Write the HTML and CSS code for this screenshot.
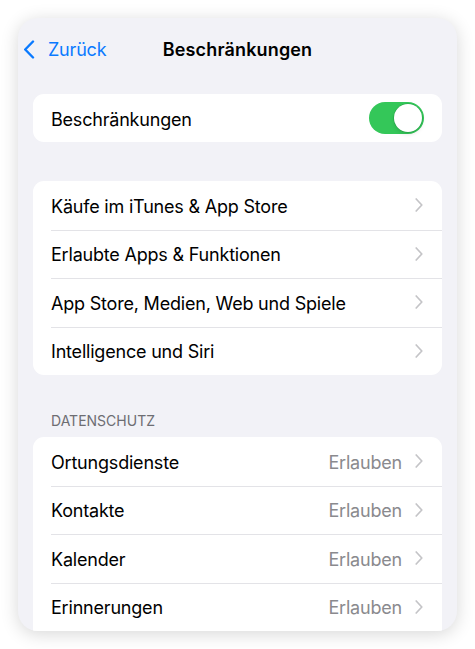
FILE: index.html
```html
<!DOCTYPE html>
<html lang="de">
<head>
<meta charset="utf-8">
<title>Beschränkungen</title>
<link rel="stylesheet" href="styles.css">
</head>
<body>
<div class="device">
  <header class="nav">
    <a class="back">
      <svg class="back-chev" width="12" height="19" viewBox="0 0 12 19"><path d="M10 1.5 L2.2 9.5 L10 17.5" fill="none" stroke="#0a7aff" stroke-width="2.4" stroke-linecap="round" stroke-linejoin="round"/></svg>
      <span>Zurück</span>
    </a>
    <h1 class="title">Beschränkungen</h1>
  </header>

  <section class="card first">
    <div class="row">
      <span class="label">Beschränkungen</span>
      <span class="toggle"><span class="knob"></span></span>
    </div>
  </section>

  <section class="card second">
    <div class="row"><span class="label">Käufe im iTunes &amp; App Store</span><svg class="chev" width="8" height="14" viewBox="0 0 8 14"><path d="M1.2 1 L6.8 7 L1.2 13" fill="none" stroke="#c4c4c7" stroke-width="1.7" stroke-linecap="round" stroke-linejoin="round"/></svg></div>
    <div class="row"><span class="label">Erlaubte Apps &amp; Funktionen</span><svg class="chev" width="8" height="14" viewBox="0 0 8 14"><path d="M1.2 1 L6.8 7 L1.2 13" fill="none" stroke="#c4c4c7" stroke-width="1.7" stroke-linecap="round" stroke-linejoin="round"/></svg></div>
    <div class="row"><span class="label">App Store, Medien, Web und Spiele</span><svg class="chev" width="8" height="14" viewBox="0 0 8 14"><path d="M1.2 1 L6.8 7 L1.2 13" fill="none" stroke="#c4c4c7" stroke-width="1.7" stroke-linecap="round" stroke-linejoin="round"/></svg></div>
    <div class="row"><span class="label">Intelligence und Siri</span><svg class="chev" width="8" height="14" viewBox="0 0 8 14"><path d="M1.2 1 L6.8 7 L1.2 13" fill="none" stroke="#c4c4c7" stroke-width="1.7" stroke-linecap="round" stroke-linejoin="round"/></svg></div>
  </section>

  <h2 class="section-head">DATENSCHUTZ</h2>
  <section class="card third">
    <div class="row"><span class="label">Ortungsdienste</span><span class="value">Erlauben</span><svg class="chev" width="8" height="14" viewBox="0 0 8 14"><path d="M1.2 1 L6.8 7 L1.2 13" fill="none" stroke="#c4c4c7" stroke-width="1.7" stroke-linecap="round" stroke-linejoin="round"/></svg></div>
    <div class="row"><span class="label">Kontakte</span><span class="value">Erlauben</span><svg class="chev" width="8" height="14" viewBox="0 0 8 14"><path d="M1.2 1 L6.8 7 L1.2 13" fill="none" stroke="#c4c4c7" stroke-width="1.7" stroke-linecap="round" stroke-linejoin="round"/></svg></div>
    <div class="row"><span class="label">Kalender</span><span class="value">Erlauben</span><svg class="chev" width="8" height="14" viewBox="0 0 8 14"><path d="M1.2 1 L6.8 7 L1.2 13" fill="none" stroke="#c4c4c7" stroke-width="1.7" stroke-linecap="round" stroke-linejoin="round"/></svg></div>
    <div class="row"><span class="label">Erinnerungen</span><span class="value">Erlauben</span><svg class="chev" width="8" height="14" viewBox="0 0 8 14"><path d="M1.2 1 L6.8 7 L1.2 13" fill="none" stroke="#c4c4c7" stroke-width="1.7" stroke-linecap="round" stroke-linejoin="round"/></svg></div>
  </section>
</div>
</body>
</html>
```
FILE: styles.css
```css
* { box-sizing: border-box; }
html, body { margin: 0; padding: 0; background: #ffffff; }
body {
  font-family: Inter, "Noto Sans", "Liberation Sans", sans-serif;
  color: #000;
  padding: 18px;
}
.device {
  width: 439px;
  height: 613px;
  background: #f2f2f7;
  border-radius: 20px;
  overflow: hidden;
  box-shadow: 0 3px 18px rgba(0, 0, 0, 0.16);
  padding: 0 15px;
}
.nav {
  position: relative;
  height: 62px;
  display: flex;
  align-items: center;
  justify-content: center;
}
.back {
  position: absolute;
  left: -10px;
  top: 0;
  bottom: 0;
  display: flex;
  align-items: center;
  gap: 13px;
  color: #0a7aff;
  font-size: 18px;
  letter-spacing: -0.2px;
}
.back-chev { display: block; }
.title {
  margin: 0;
  font-size: 18px;
  font-weight: 600;
  letter-spacing: 0.15px;
}
.card {
  background: #fff;
  border-radius: 11px;
}
.first { margin-top: 14px; }
.second { margin-top: 39px; }
.third {
  border-bottom-left-radius: 0;
  border-bottom-right-radius: 0;
}
.row {
  height: 48.5px;
  display: flex;
  align-items: center;
  padding: 2px 19px 0 18px;
  position: relative;
  font-size: 18px;
  letter-spacing: -0.2px;
}
.row .chev, .row .toggle { margin-top: -2px; }
.first .row { height: 48px; padding-right: 18px; }
.row + .row::before {
  content: "";
  position: absolute;
  left: 18px;
  right: 0;
  top: 0;
  border-top: 1px solid #e3e3e7;
}
.label { flex: 1; }
.value { color: #8a8a8e; margin-right: 13px; }
.chev { display: block; }
.section-head {
  margin: 38px 0 0;
  padding: 0 18px 8px;
  font-size: 14px;
  line-height: 16px;
  font-weight: 400;
  color: #6d6d72;
  letter-spacing: 0;
}
.toggle {
  width: 55px;
  height: 32px;
  border-radius: 16px;
  background: #34c759;
  position: relative;
  display: block;
}
.knob {
  position: absolute;
  right: 2px;
  top: 2px;
  width: 28px;
  height: 28px;
  border-radius: 50%;
  background: #fff;
  box-shadow: 0 0 0 0.5px rgba(0, 120, 40, 0.4), 0 2px 4px rgba(0, 0, 0, 0.12);
}
```
